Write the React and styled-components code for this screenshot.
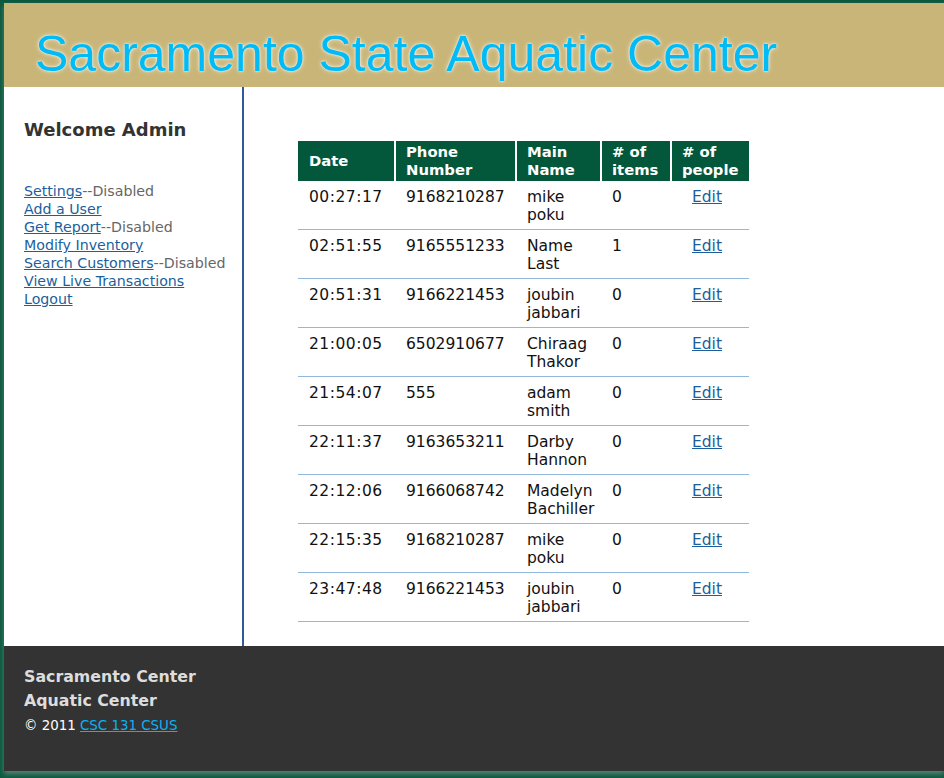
import React from 'react';
import styled, { createGlobalStyle } from 'styled-components';

const rows = [
    { time: '00:27:17', phone: '9168210287', name: ['mike', 'poku'], items: 0 },
    { time: '02:51:55', phone: '9165551233', name: ['Name', 'Last'], items: 1 },
    { time: '20:51:31', phone: '9166221453', name: ['joubin', 'jabbari'], items: 0 },
    { time: '21:00:05', phone: '6502910677', name: ['Chiraag', 'Thakor'], items: 0 },
    { time: '21:54:07', phone: '555', name: ['adam', 'smith'], items: 0 },
    { time: '22:11:37', phone: '9163653211', name: ['Darby', 'Hannon'], items: 0 },
    { time: '22:12:06', phone: '9166068742', name: ['Madelyn', 'Bachiller'], items: 0 },
    { time: '22:15:35', phone: '9168210287', name: ['mike', 'poku'], items: 0 },
    { time: '23:47:48', phone: '9166221453', name: ['joubin', 'jabbari'], items: 0 },
];

const menu = [
    { label: 'Settings', disabled: true },
    { label: 'Add a User' },
    { label: 'Get Report', disabled: true },
    { label: 'Modify Inventory' },
    { label: 'Search Customers', disabled: true },
    { label: 'View Live Transactions' },
    { label: 'Logout' },
];

const App = () => {
    return (
        <>
            <GlobalStyle />
            <Page>
                <Header>
                    <Title>Sacramento State Aquatic Center</Title>
                </Header>
                <Body>
                    <Sidebar>
                        <Welcome>Welcome Admin</Welcome>
                        <Menu>
                            {menu.map((m) => (
                                <MenuItem key={m.label}>
                                    <NavLink href="#">{m.label}</NavLink>
                                    {m.disabled && <Disabled>--Disabled</Disabled>}
                                </MenuItem>
                            ))}
                        </Menu>
                    </Sidebar>
                    <Main>
                        <Table>
                            <colgroup>
                                <col style={{ width: 96 }} />
                                <col style={{ width: 121 }} />
                                <col style={{ width: 85 }} />
                                <col style={{ width: 70 }} />
                                <col style={{ width: 79 }} />
                            </colgroup>
                            <thead>
                                <tr>
                                    <Th>Date</Th>
                                    <Th>Phone<br />Number</Th>
                                    <Th>Main<br />Name</Th>
                                    <Th># of<br />items</Th>
                                    <Th># of<br />people</Th>
                                </tr>
                            </thead>
                            <tbody>
                                {rows.map((r, i) => (
                                    <tr key={i}>
                                        <Td $time>{r.time}</Td>
                                        <Td>{r.phone}</Td>
                                        <Td>{r.name[0]}<br />{r.name[1]}</Td>
                                        <Td>{r.items}</Td>
                                        <Td $center><NavLink href="#">Edit</NavLink></Td>
                                    </tr>
                                ))}
                            </tbody>
                        </Table>
                    </Main>
                </Body>
                <Footer>
                    <FooterTitle>Sacramento Center<br />Aquatic Center</FooterTitle>
                    <Copy>© 2011 <FooterLink href="#">CSC 131 CSUS</FooterLink></Copy>
                </Footer>
            </Page>
        </>
    );
};

const GlobalStyle = createGlobalStyle`
    html, body {
        margin: 0;
        padding: 0;
        height: 100%;
        overflow: hidden;
        background: #0b5a3f;
    }
    body {
        font-family: "DejaVu Sans", Verdana, sans-serif;
    }
`;

const Page = styled.div`
    margin: 3px 0 0 4px;
    background: #fff;
    box-shadow: 0 3px 5px rgba(150, 170, 160, 0.55);
`;

const Header = styled.header`
    height: 84px;
    background: #c9b577;
    padding-left: 31px;
    display: flex;
    align-items: flex-start;
`;

const Title = styled.h1`
    margin: 0;
    padding-top: 22px;
    font-family: "Liberation Sans", Arial, sans-serif;
    font-weight: normal;
    font-size: 50px;
    line-height: 58px;
    color: #00bbf5;
    text-shadow: 0 0 2px #fff, 0 0 5px rgba(255, 255, 255, 0.7);
    white-space: nowrap;
`;

const Body = styled.div`
    display: flex;
`;

const Sidebar = styled.aside`
    width: 218px;
    padding: 30px 0 0 20px;
    border-right: 2px solid #2f5b9b;
    flex-shrink: 0;
`;

const Welcome = styled.h2`
    margin: 0;
    font-size: 18px;
    line-height: 26px;
    color: #333;
`;

const Menu = styled.ul`
    list-style: none;
    margin: 39px 0 0;
    padding: 0;
    font-size: 14.2px;
    line-height: 18px;
`;

const MenuItem = styled.li`
    white-space: nowrap;
`;

const NavLink = styled.a`
    color: #1c5f9c;
    text-decoration: underline;
`;

const Disabled = styled.span`
    color: #666;
`;

const Main = styled.main`
    flex: 1;
    padding: 54px 0 24px 54px;
`;

const Table = styled.table`
    border-collapse: separate;
    border-spacing: 0;
    table-layout: fixed;
    width: 451px;
`;

const Th = styled.th`
    background: #03573b;
    color: #fff;
    font-size: 14.8px;
    line-height: 18px;
    font-weight: bold;
    text-align: left;
    vertical-align: middle;
    height: 40px;
    padding: 0 0 0 10px;
    box-sizing: border-box;
    border-left: 2px solid #fff;

    &:first-child {
        border-left: none;
        padding-left: 11px;
    }
`;

const Td = styled.td`
    font-size: 15.5px;
    line-height: 18px;
    color: #111;
    vertical-align: top;
    padding: 7px ${(p) => (p.$center ? '5px' : '0')} 5px ${(p) => (p.$center ? '0' : '12px')};
    text-align: ${(p) => (p.$center ? 'center' : 'left')};
    letter-spacing: ${(p) => (p.$time ? '0.5px' : 'normal')};
    border-bottom: 1px solid #92b8de;
    white-space: nowrap;

    &:first-child {
        padding-left: 11px;
    }
`;

const Footer = styled.footer`
    background: #333;
    height: 125px;
    padding: 19px 0 0 20px;
    box-sizing: border-box;
`;

const FooterTitle = styled.div`
    font-size: 15.8px;
    line-height: 24px;
    font-weight: bold;
    color: #ddd;
`;

const Copy = styled.div`
    margin-top: 4px;
    font-size: 13.4px;
    line-height: 18px;
    color: #fff;
`;

const FooterLink = styled.a`
    color: #0cb1f0;
    text-decoration: underline;
`;

export default App;
